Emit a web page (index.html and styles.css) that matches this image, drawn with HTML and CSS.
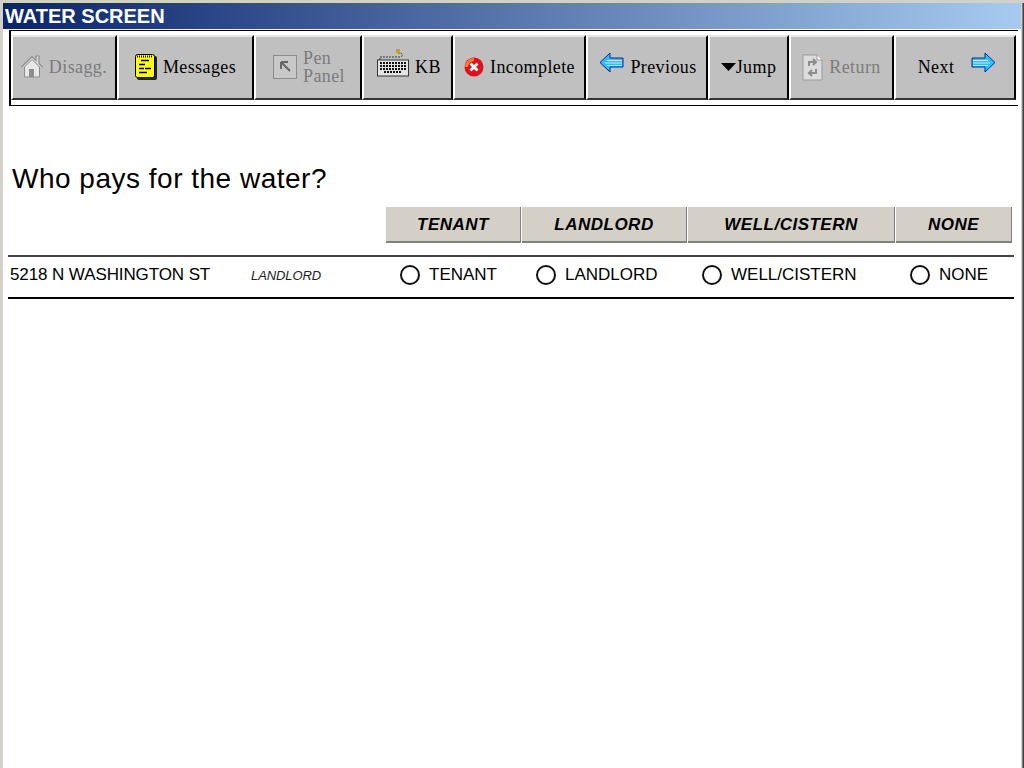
FILE: index.html
```html
<!DOCTYPE html>
<html lang="en">
<head>
    <meta charset="UTF-8">
    <title>Water Screen</title>
    <link rel="stylesheet" href="styles.css">
</head>
<body>
    <div class="window">
        <div class="title-bar">WATER SCREEN</div>
        <div class="toolbar">
            <div class="tool disabled">
                <svg width="22" height="24" viewBox="0 0 22 24"><path d="M0.500 12 11 1.500l4 4V1h3v7.500l3.500 3.500" fill="#d8d8d8" stroke="#8c8c8c" stroke-width="1.200"/><path d="M3.500 12 11 4.500l7.500 7.500v10h-15z" fill="#e8e8e8" stroke="#8c8c8c"/><rect x="8" y="14" width="5" height="8" fill="#8c8c8c"/></svg>
                <span>Disagg.</span>
            </div>
            <div class="tool">
                <svg width="22" height="26" viewBox="0 0 22 26"><rect x="2" y="2" width="20" height="24" rx="2" fill="#222"/><rect x="0.500" y="0.500" width="19" height="23" rx="2" fill="#ffff00" stroke="#000"/><path d="M2 2.500h16" stroke="#000" stroke-width="2" stroke-dasharray="1 1"/><path d="M6 6.500h8M4 10.500h6M4 14.500h5M10 14.500h6M4 18.500h8" stroke="#000" stroke-width="1.300"/></svg>
                <span>Messages</span>
            </div>
            <div class="tool disabled pen">
                <svg width="24" height="24" viewBox="0 0 24 24"><rect x="0.500" y="0.500" width="23" height="23" fill="#c8c8c8" stroke="#8c8c8c"/><path d="M8 7h7M8 7v7M8 7l9 9" fill="none" stroke="#666" stroke-width="2"/></svg>
                <span class="two-line">Pen<br>Panel</span>
            </div>
            <div class="tool kb">
                <svg class="keyboard" width="32" height="28" viewBox="0 0 32 28"><path d="M3 11V8h20c3 0 3-4 0-4h-2" fill="none" stroke="#333" stroke-dasharray="2 1"/><rect x="19" y="0" width="4" height="4" fill="#c8a800"/><rect x="0.500" y="11" width="31" height="16" fill="#e4e4e4" stroke="#333"/><path d="M3 14h26M3 17h26M3 20h26M7 23h18" stroke="#111" stroke-width="2" stroke-dasharray="2 1"/></svg>
                <span>KB</span>
            </div>
            <div class="tool">
                <svg width="20" height="20" viewBox="0 0 20 20"><circle cx="10" cy="10" r="9.500" fill="#e0101c"/><path d="M1 10a9 9 0 0 1 9-9v3a6 6 0 0 0-6 6z" fill="#ff8030"/><path d="M6.500 6.500l7 7M13.500 6.500l-7 7" stroke="#fff" stroke-width="2.800"/></svg>
                <span>Incomplete</span>
            </div>
            <div class="tool previous">
                <svg class="raised" width="25" height="21" viewBox="0 0 25 21"><path d="M1 10.500 11 1v5h13v9H11v5z" fill="#33bbff" stroke="#003388"/><path d="M8 8.500h15M6 11h17M8 13.500h15" stroke="#bff0ff"/></svg>
                <span>Previous</span>
            </div>
            <div class="tool">
                <svg width="15" height="8" viewBox="0 0 15 8"><path d="M0 0h15L7.500 8z" fill="#000"/></svg>
                <span class="tight">Jump</span>
            </div>
            <div class="tool disabled">
                <svg width="21" height="27" viewBox="0 0 21 27"><path d="M1 1h14l5 5v20H1z" fill="#dcdcdc" stroke="#9a9a9a"/><path d="M15 1v5h5" fill="#fff" stroke="#9a9a9a"/><path d="M7 12V8h6M11 5l3 3-3 3M14 15v4H7M10 16l-3 3 3 3" fill="none" stroke="#8c8c8c" stroke-width="2"/></svg>
                <span>Return</span>
            </div>
            <div class="tool next">
                <span>Next</span>
                <svg class="raised" width="25" height="21" viewBox="0 0 25 21"><path d="M24 10.500 14 1v5H1v9h13v5z" fill="#33bbff" stroke="#003388"/><path d="M2 8.500h15M2 11h17M2 13.500h15" stroke="#bff0ff"/></svg>
            </div>
        </div>

        <h1 class="question">Who pays for the water?</h1>

        <div class="answers-head">
            <div class="head-cell">TENANT</div>
            <div class="head-cell">LANDLORD</div>
            <div class="head-cell">WELL/CISTERN</div>
            <div class="head-cell">NONE</div>
        </div>

        <div class="answer-row">
            <div class="address">5218 N WASHINGTON ST</div>
            <div class="prior">LANDLORD</div>
            <div class="option"><span class="radio"></span>TENANT</div>
            <div class="option"><span class="radio"></span>LANDLORD</div>
            <div class="option"><span class="radio"></span>WELL/CISTERN</div>
            <div class="option"><span class="radio"></span>NONE</div>
        </div>
    </div>
</body>
</html>
```

FILE: styles.css
```css
* {
    box-sizing: border-box;
}
body {
    margin: 0;
    background: #fff;
    font-family: "Liberation Sans", Arial, sans-serif;
    color: #000;
}
.window {
    width: 1024px;
    height: 768px;
    overflow: hidden;
    padding: 3px 3px 0 3px;
    background: #fff;
    box-shadow: inset 3px 0 #d4d0c8, inset 0 3px #d4d0c8, inset -1px 0 #404040, inset -2px 0 #808080, inset -3px 0 #d4d0c8;
}
.title-bar {
    height: 26px;
    padding-left: 2px;
    background: linear-gradient(90deg, #0a246a, #a6caf0);
    color: #fff;
    font-size: 20px;
    font-weight: bold;
    line-height: 27px;
}
.toolbar {
    display: grid;
    grid-template-columns: 106px 137px 108px 91px 133px 122px 81px 105px 122px;
    width: 1009px;
    height: 76px;
    margin: 1px 0 0 6px;
    padding: 4px 0 5px 0;
    border-top: 1px solid #000;
    border-bottom: 1px solid #000;
    border-left: 2px solid #000;
}
.tool {
    display: flex;
    align-items: center;
    justify-content: center;
    gap: 6px;
    padding-bottom: 1px;
    background: #c0c0c0;
    border-style: solid;
    border-width: 2px;
    border-color: #e8e8e8 #000 #333 #fff;
    font-family: "Liberation Serif", "Times New Roman", serif;
    font-size: 18px;
    letter-spacing: 0.4px;
}
.tool.disabled {
    color: #7b7b7b;
}
.two-line {
    line-height: 18px;
}
.tool .tight {
    margin-left: -6px;
}
.tool .raised {
    margin-bottom: 10px;
}
.tool .keyboard {
    margin-bottom: 8px;
}
.pen {
    padding-left: 2px;
}
.kb {
    padding-left: 3px;
}
.previous {
    padding-left: 2px;
}
.next {
    gap: 17px;
    padding-left: 4px;
}
.question {
    margin: 58px 0 0 9px;
    font-size: 28px;
    font-weight: normal;
    line-height: 30px;
    letter-spacing: 0.5px;
}
.answers-head {
    display: grid;
    grid-template-columns: 135px 165px 207px 116px;
    gap: 1px;
    height: 36px;
    margin: 13px 0 0 383px;
}
.head-cell {
    display: flex;
    align-items: center;
    justify-content: center;
    padding-top: 1px;
    background: #d4d0c8;
    border-right: 1px solid #808080;
    border-bottom: 2px solid #808080;
    font-size: 17px;
    font-weight: bold;
    font-style: italic;
    letter-spacing: 0.5px;
}
.answer-row {
    display: grid;
    grid-template-columns: 241px 136px 136px 166px 208px 115px;
    align-items: center;
    width: 1006px;
    height: 44px;
    margin: 12px 0 0 5px;
    padding: 0 0 4px 2px;
    border-top: 2px solid #444;
    border-bottom: 2px solid #000;
    font-size: 17px;
}
.address {
    letter-spacing: -0.1px;
}
.prior {
    font-size: 13px;
    font-style: italic;
    letter-spacing: -0.1px;
    color: #222;
}
.option {
    display: flex;
    align-items: center;
    gap: 9px;
    padding-left: 13px;
}
.radio {
    width: 20px;
    height: 20px;
    border: 2px solid #111;
    border-radius: 50%;
}
```
